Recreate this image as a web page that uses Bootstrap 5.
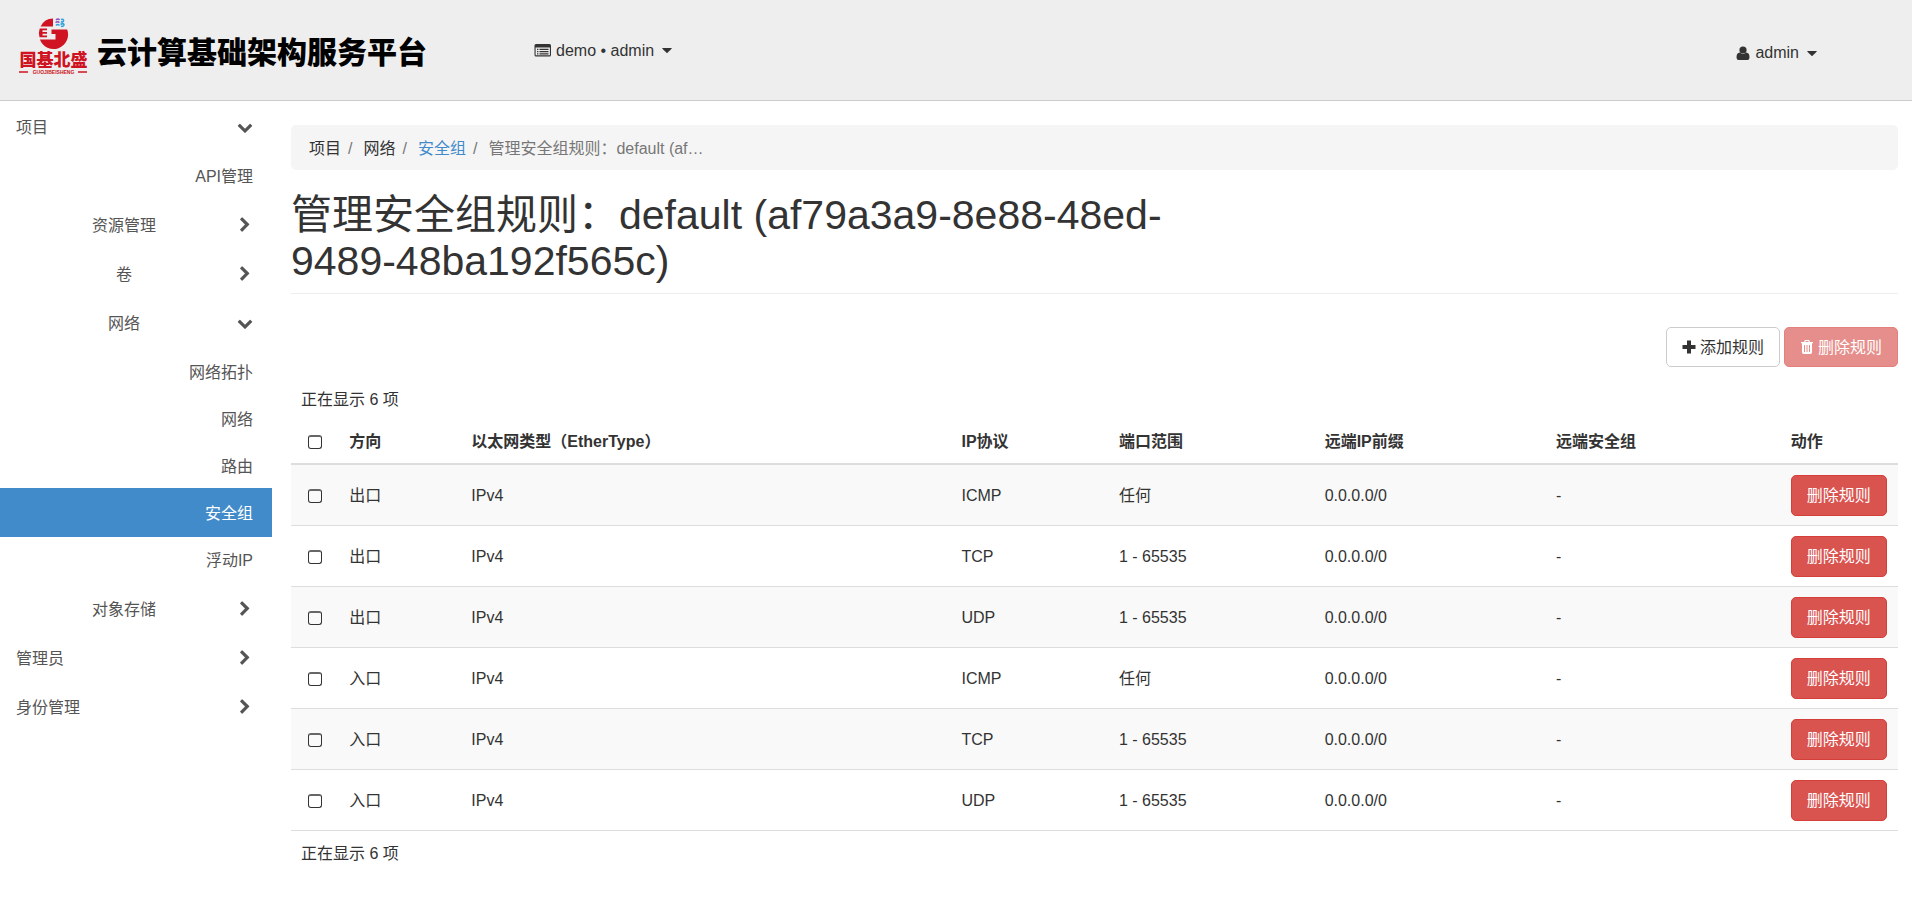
<!DOCTYPE html>
<html lang="zh-CN">
<head>
<meta charset="utf-8">
<meta name="viewport" content="width=device-width, initial-scale=1">
<title>管理安全组规则 - 云计算基础架构服务平台</title>
<link href="https://cdn.jsdelivr.net/npm/bootstrap@5.3.0/dist/css/bootstrap.min.css" rel="stylesheet">
<style>
  body { font-family: "Liberation Sans", "Noto Sans CJK SC", sans-serif; font-size: 16px; line-height: 23px; color: #333; background: #fff; }
  a { text-decoration: none; }
  .glyph { width: 16px; height: 16px; fill: currentColor; flex: none; }

  /* top bar */
  .topbar { height: 101px; background: #eee; border-bottom: 1px solid #ccc; padding: 0 95px 0 18px; }
  .topbar .nav-link { color: #333; padding: 0; }
  .brand-logo { margin-bottom: 6px; }
  .brand-title { font-size: 30px; line-height: 36px; font-weight: 900; color: #000; margin-left: 8px; padding-top: 6px; }
  .project-switch { margin-left: 107px; }
  .user-menu { padding-top: 5px; }
  .caret { width: 10px; height: 16px; fill: currentColor; }

  /* sidebar */
  .side { width: 272px; flex: none; padding-top: 1px; }
  .side a { display: flex; align-items: center; gap: 5px; height: 49px; padding: 0 19px 0 16px; color: #555; }
  .side span { padding-top: 2px; }
  .side .leaf { justify-content: flex-end; height: 47px; padding-top: 2px; }
  .side .leaf.active { height: 49px; margin: -1px 0; background: #428bca; color: #fff; }
  .side ul ul ul { padding: 1px 0; }

  /* content */
  .content { padding: 24px 14px 24px 19px; }
  .breadcrumb { background: #f5f5f5; border-radius: 5px; padding: 12px 18px 10px; margin-bottom: 22px; }
  .breadcrumb-item + .breadcrumb-item { padding-left: 0; }
  .breadcrumb-item + .breadcrumb-item::before { color: #777; padding: 0 11px 0 7px; }
  .breadcrumb-item a { color: #428bca; }
  .breadcrumb-item.active { color: #777; }
  .page-head { border-bottom: 1px solid #eee; padding-bottom: 9px; margin-bottom: 33px; }
  .page-head h1 { font-size: 41px; line-height: 46px; font-weight: 400; margin: 0; }
  .content .btn { font-size: 16px; line-height: 23px; border-radius: 5px; padding: 8px 15px; height: 41px; }
  .content .toolbar .btn { height: 40px; padding: 7px 15px; }
  .btn-plain, .btn-plain:hover { background: #fff; border-color: #ccc; color: #333; }
  .btn-del, .btn-del:hover, .btn-del:disabled { background: #d9534f; border-color: #d43f3a; color: #fff; }
  .btn-del:disabled { opacity: .65; }

  /* rules table */
  .rules { table-layout: fixed; border-collapse: separate; border-spacing: 0; caption-side: top; color: #333; margin-top: 10px; --bs-table-striped-bg: #f9f9f9; --bs-table-striped-color: #333; --bs-table-color: #333; }
  .rules caption, .count-foot { color: #333; padding: 11px 10px 9px; }
  .rules > :not(caption) > * > * { padding: 10px 10px 9px; border-bottom: 1px solid #ddd; }
  .rules > thead > tr > th { padding-bottom: 10px; border-bottom-width: 2px; }
  .rules th:nth-child(1) { width: 3%; }
  .rules th:nth-child(2) { width: 7.6%; }
  .rules th:nth-child(3) { width: 30.5%; }
  .rules th:nth-child(4) { width: 9.8%; }
  .rules th:nth-child(5) { width: 12.8%; }
  .rules th:nth-child(6) { width: 14.4%; }
  .rules th:nth-child(7) { width: 14.6%; }
  .rules tr > :first-child { padding-left: 17px; padding-right: 0; }
  .tick { appearance: none; display: block; width: 14px; height: 14px; margin: 1px 0 0; border: 1px solid #333; border-top: 2px solid #666; border-radius: 3px; background: transparent; }
  .tick:checked { background: #428bca; }
</style>
</head>
<body>
<svg class="d-none" aria-hidden="true">
  <symbol id="i-right" viewBox="0 0 1792 1792"><path d="M1363 877l-742 742q-19 19-45 19t-45-19l-166-166q-19-19-19-45t19-45l531-531-531-531q-19-19-19-45t19-45l166-166q19-19 45-19t45 19l742 742q19 19 19 45t-19 45z"/></symbol>
  <symbol id="i-down" viewBox="0 0 1792 1792"><path d="M1683 808l-742 741q-19 19-45 19t-45-19l-742-741q-19-19-19-45.5t19-45.5l166-165q19-19 45-19t45 19l531 531 531-531q19-19 45-19t45 19l166 165q19 19 19 45.500t-19 45.500z"/></symbol>
  <symbol id="i-caret" viewBox="0 0 10 16"><path d="M.6 6h8.800q.5.3.2.700L5.500 10.800q-.5.4-1 0L.4 6.700Q.1 6.300.6 6z"/></symbol>
</svg>

<header class="topbar d-flex align-items-center">
  <a class="d-flex align-items-center flex-shrink-0" href="#">
    <svg class="brand-logo" width="71" height="62" viewBox="0 0 71 62" role="img" aria-label="国基北盛">
      <path fill="#cf1322" d="M35 2.500v8H22.600A14 14 0 0 1 35 2.500zM21.700 12.500h7.300v1.800h-4.500v1.700h4.500v1.800h-4.500v1.700h4.500v1.700h-7.500A14 14 0 0 1 21.700 12.500zM33.500 13.500h15.700A14 14 0 0 1 21.900 23.500H37.500V18h-4z"/>
      <path fill="none" stroke="#8b4fc0" stroke-width="1.500" d="M38 4q2-2 3.500 0M37.500 6.500q2-1.500 4 0"/>
      <path fill="none" stroke="#36a5dc" stroke-width="1.600" d="M43 3.500q3-1 2.500 1.500-1 1.500-2.500.5M38 9.500q1.500-2 3.500 0M42.500 8.500q3-2 3.500.5-1 2-3 1"/>
      <g fill="#cf1322" text-anchor="middle" font-weight="900">
        <text x="35.500" y="50" font-size="17">国基北盛</text>
        <text x="35.500" y="58" font-size="5">GUOJIBEISHENG</text>
        <path d="M1 55.300h9v1.400H1zM60 55.300h9v1.400h-9z"/>
      </g>
    </svg>
    <span class="brand-title">云计算基础架构服务平台</span>
  </a>
  <nav class="project-switch flex-shrink-0">
    <a class="nav-link d-flex align-items-center" href="#" aria-haspopup="true">
      <svg class="me-1" width="18" height="16" viewBox="0 0 18 16" fill="currentColor"><path fill-rule="evenodd" d="M2 2h13.500q1.500 0 1.500 1.500V13q0 1.500-1.500 1.500H2Q.5 14.500.5 13V3.500Q.5 2 2 2zm-.4 3.500v7.700h14.300V5.500z"/><path d="M3 6.700h1.400V8H3zM3 9h1.400v1.300H3zM3 11.200h1.400v1.300H3zM5.500 6.700h9V8h-9zM5.500 9h9v1.300h-9zM5.500 11.200h9v1.300h-9z"/></svg>
      <span>demo • admin</span>
      <svg class="caret ms-2"><use href="#i-caret"/></svg>
    </a>
  </nav>
  <nav class="user-menu ms-auto">
    <a class="nav-link d-flex align-items-center" href="#" aria-haspopup="true">
      <svg class="me-1" width="16" height="16" viewBox="0 0 16 16" fill="currentColor"><circle cx="8" cy="5" r="3.600"/><path d="M4.800 7.600Q8 10.300 11.200 7.600q3.300.3 3.300 4.800 0 2.600-2.200 2.600H3.700q-2.200 0-2.200-2.600 0-4.500 3.300-4.800z"/></svg>
      <span>admin</span>
      <svg class="caret ms-2"><use href="#i-caret"/></svg>
    </a>
  </nav>
</header>

<div class="d-flex">
  <nav class="side" aria-label="主导航">
    <ul class="list-unstyled mb-0">
      <li>
        <a href="#"><span class="flex-grow-1">项目</span><svg class="glyph"><use href="#i-down"/></svg></a>
        <ul class="list-unstyled">
          <li><ul class="list-unstyled"><li><a class="leaf" href="#">API管理</a></li></ul></li>
          <li><a href="#"><span class="flex-grow-1 text-center">资源管理</span><svg class="glyph"><use href="#i-right"/></svg></a></li>
          <li><a href="#"><span class="flex-grow-1 text-center">卷</span><svg class="glyph"><use href="#i-right"/></svg></a></li>
          <li>
            <a href="#"><span class="flex-grow-1 text-center">网络</span><svg class="glyph"><use href="#i-down"/></svg></a>
            <ul class="list-unstyled">
              <li><a class="leaf" href="#">网络拓扑</a></li>
              <li><a class="leaf" href="#">网络</a></li>
              <li><a class="leaf" href="#">路由</a></li>
              <li><a class="leaf active" href="#" aria-current="page">安全组</a></li>
              <li><a class="leaf" href="#">浮动IP</a></li>
            </ul>
          </li>
          <li><a href="#"><span class="flex-grow-1 text-center">对象存储</span><svg class="glyph"><use href="#i-right"/></svg></a></li>
        </ul>
      </li>
      <li><a href="#"><span class="flex-grow-1">管理员</span><svg class="glyph"><use href="#i-right"/></svg></a></li>
      <li><a href="#"><span class="flex-grow-1">身份管理</span><svg class="glyph"><use href="#i-right"/></svg></a></li>
    </ul>
  </nav>

  <main class="content flex-grow-1">
    <nav aria-label="breadcrumb">
      <ol class="breadcrumb">
        <li class="breadcrumb-item">项目</li>
        <li class="breadcrumb-item">网络</li>
        <li class="breadcrumb-item"><a href="#">安全组</a></li>
        <li class="breadcrumb-item active" aria-current="page">管理安全组规则：default (af…</li>
      </ol>
    </nav>

    <div class="page-head">
      <div class="row">
        <div class="col-7"><h1>管理安全组规则：default (af79a3a9-8e88-48ed-9489-48ba192f565c)</h1></div>
      </div>
    </div>

    <div class="toolbar d-flex justify-content-end">
      <button type="button" class="btn btn-plain d-flex align-items-center me-1">
        <svg class="me-1" width="14" height="14" viewBox="0 0 14 14" fill="currentColor"><path d="M5 .5h4v4.500h4.500v4H9v4.500H5V9H.5V5H5z"/></svg>添加规则
      </button>
      <button type="button" class="btn btn-del d-flex align-items-center" disabled>
        <svg class="me-1" width="14" height="16" viewBox="0 0 14 16" fill="currentColor"><path fill-rule="evenodd" d="M4 3l.8-2h4.400l.8 2h3v1.300h-1V13q0 2-1.500 2h-7Q2 15 2 13V4.300H1V3zm1.300 0h3.400l-.4-.9H5.700zM4 6v7h1V6zm2.500 0v7h1V6zM9 6v7h1V6z"/></svg>删除规则
      </button>
    </div>

    <table class="table table-striped rules mb-0">
      <caption>正在显示 6 项</caption>
      <thead class="align-middle">
        <tr>
          <th scope="col"><input class="tick" type="checkbox" aria-label="全选"></th>
          <th scope="col">方向</th><th scope="col">以太网类型（EtherType）</th><th scope="col">IP协议</th><th scope="col">端口范围</th><th scope="col">远端IP前缀</th><th scope="col">远端安全组</th><th scope="col">动作</th>
        </tr>
      </thead>
      <tbody class="align-middle">
        <tr><td><input class="tick" type="checkbox" aria-label="选择规则 1"></td><td>出口</td><td>IPv4</td><td>ICMP</td><td>任何</td><td>0.0.0.0/0</td><td>-</td><td><button type="button" class="btn btn-del d-block">删除规则</button></td></tr>
        <tr><td><input class="tick" type="checkbox" aria-label="选择规则 2"></td><td>出口</td><td>IPv4</td><td>TCP</td><td>1 - 65535</td><td>0.0.0.0/0</td><td>-</td><td><button type="button" class="btn btn-del d-block">删除规则</button></td></tr>
        <tr><td><input class="tick" type="checkbox" aria-label="选择规则 3"></td><td>出口</td><td>IPv4</td><td>UDP</td><td>1 - 65535</td><td>0.0.0.0/0</td><td>-</td><td><button type="button" class="btn btn-del d-block">删除规则</button></td></tr>
        <tr><td><input class="tick" type="checkbox" aria-label="选择规则 4"></td><td>入口</td><td>IPv4</td><td>ICMP</td><td>任何</td><td>0.0.0.0/0</td><td>-</td><td><button type="button" class="btn btn-del d-block">删除规则</button></td></tr>
        <tr><td><input class="tick" type="checkbox" aria-label="选择规则 5"></td><td>入口</td><td>IPv4</td><td>TCP</td><td>1 - 65535</td><td>0.0.0.0/0</td><td>-</td><td><button type="button" class="btn btn-del d-block">删除规则</button></td></tr>
        <tr><td><input class="tick" type="checkbox" aria-label="选择规则 6"></td><td>入口</td><td>IPv4</td><td>UDP</td><td>1 - 65535</td><td>0.0.0.0/0</td><td>-</td><td><button type="button" class="btn btn-del d-block">删除规则</button></td></tr>
      </tbody>
    </table>
    <div class="count-foot">正在显示 6 项</div>
  </main>
</div>
<script src="https://cdn.jsdelivr.net/npm/bootstrap@5.3.0/dist/js/bootstrap.bundle.min.js"></script>
</body>
</html>
